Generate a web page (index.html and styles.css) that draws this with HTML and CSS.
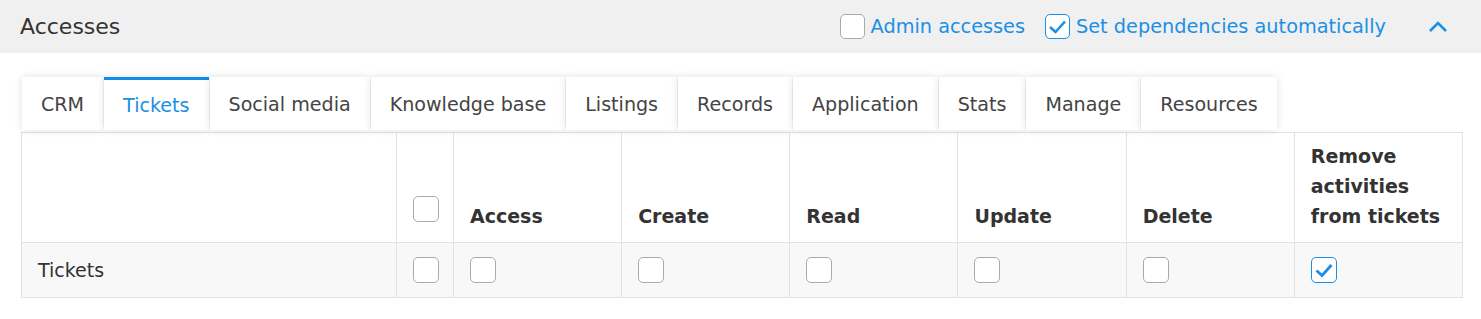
FILE: index.html
```html
<html lang="en">
<head>
    <meta charset="UTF-8">
    <title>Accesses</title>
    <link rel="stylesheet" href="styles.css">
</head>
<body>
    <div class="panel-head">
        <h2 class="panel-title">Accesses</h2>
        <label class="head-opt">
            <span class="cb"></span>
            <span>Admin accesses</span>
        </label>
        <label class="head-opt">
            <span class="cb cb-on">
                <svg width="25" height="25" viewBox="0 0 25 25"><polyline points="5,13 10.5,18 20,7.5" fill="none" stroke="#1b8fe6" stroke-width="2.6"/></svg>
            </span>
            <span>Set dependencies automatically</span>
        </label>
        <span class="toggle">
            <svg width="20" height="14" viewBox="0 0 20 14"><polyline points="2,11 10,3 18,11" fill="none" stroke="#1b8fe6" stroke-width="2.6"/></svg>
        </span>
    </div>

    <div class="panel-body">
        <ul class="tabs">
            <li>CRM</li>
            <li class="active">Tickets</li>
            <li>Social media</li>
            <li>Knowledge base</li>
            <li>Listings</li>
            <li>Records</li>
            <li>Application</li>
            <li>Stats</li>
            <li>Manage</li>
            <li>Resources</li>
        </ul>

        <table class="rights">
            <colgroup>
                <col class="c-name">
                <col class="c-all">
                <col><col><col><col><col><col>
            </colgroup>
            <thead>
                <tr>
                    <th></th>
                    <th><span class="cb"></span></th>
                    <th>Access</th>
                    <th>Create</th>
                    <th>Read</th>
                    <th>Update</th>
                    <th>Delete</th>
                    <th>Remove activities from tickets</th>
                </tr>
            </thead>
            <tbody>
                <tr>
                    <td class="name">Tickets</td>
                    <td><span class="cb"></span></td>
                    <td><span class="cb"></span></td>
                    <td><span class="cb"></span></td>
                    <td><span class="cb"></span></td>
                    <td><span class="cb"></span></td>
                    <td><span class="cb"></span></td>
                    <td>
                        <span class="cb cb-on">
                            <svg width="26" height="26" viewBox="0 0 26 26"><polyline points="5.5,13.5 11,18.5 20.5,8" fill="none" stroke="#1b8fe6" stroke-width="2.8"/></svg>
                        </span>
                    </td>
                </tr>
            </tbody>
        </table>
    </div>
</body>
</html>
```

FILE: styles.css
```css
* {
    margin: 0;
    padding: 0;
    list-style: none;
    box-sizing: border-box;
}

body {
    font-family: "DejaVu Sans", Verdana, sans-serif;
    font-size: 19px;
    color: #333;
    background: #fff;
}

/* header bar */
.panel-head {
    height: 53px;
    background: #f0f0f0;
    display: flex;
    align-items: center;
    padding: 0 33px 0 20px;
}

.panel-title {
    font-size: 22px;
    font-weight: normal;
    color: #333;
    flex: 1;
}

.head-opt {
    display: flex;
    align-items: center;
    gap: 6px;
    font-size: 19.3px;
    color: #1b8fe6;
    margin-right: 20px;
    cursor: pointer;
}

.head-opt .cb {
    width: 25px;
    height: 25px;
}

.toggle {
    display: flex;
    margin-left: 22px;
}

/* checkbox */
.cb {
    display: inline-block;
    width: 26px;
    height: 26px;
    border: 1px solid #aaa;
    border-radius: 5px;
    background: #fff;
    vertical-align: middle;
}

.cb-on {
    border-color: #1b8fe6;
}

.cb svg {
    display: block;
    margin: -1px;
}

/* tabs */
.panel-body {
    padding: 24px 18px 20px 21px;
}

.tabs {
    display: flex;
    gap: 1px;
    margin-left: 1px;
    margin-bottom: 2px;
}

.tabs li {
    height: 53px;
    line-height: 55px;
    padding: 0 19px;
    font-size: 19.1px;
    background: #fff;
    color: #444;
    box-shadow: 0 0 8px rgba(0, 0, 0, 0.12);
    cursor: pointer;
}

.tabs li.active {
    color: #1b8fe6;
    border-top: 3px solid #0d8de6;
    line-height: 52px;
}

/* rights table */
.rights {
    width: 100%;
    border-collapse: collapse;
    table-layout: fixed;
    font-size: 19px;
    color: #333;
}

.c-name {
    width: 375px;
}

.c-all {
    width: 57px;
}

.rights th,
.rights td {
    border: 1px solid #e2e2e2;
    padding: 10px 16px;
    text-align: left;
}

.rights th {
    padding-top: 8px;
    padding-bottom: 11px;
    font-weight: bold;
    line-height: 30px;
    vertical-align: bottom;
}

.rights th .cb {
    margin-bottom: 9px;
}

.rights tbody tr {
    background: #f8f8f8;
}

.rights td {
    height: 55px;
    padding-top: 0;
    padding-bottom: 0;
    vertical-align: middle;
}

.rights td .cb {
    display: block;
}
```
